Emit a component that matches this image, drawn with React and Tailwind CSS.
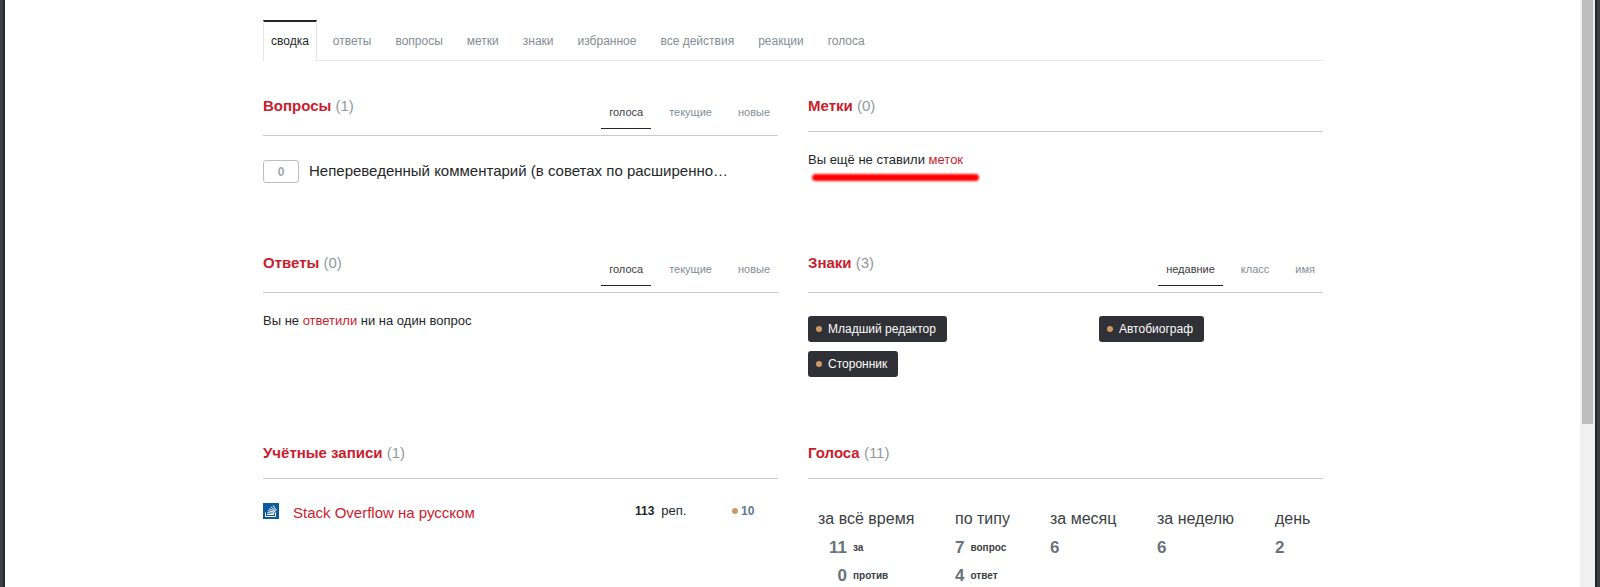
import React from 'react';

const tabs = ['ответы', 'вопросы', 'метки', 'знаки', 'избранное', 'все действия', 'реакции', 'голоса'];

function SubTabs({ items }) {
  return (
    <div className="flex gap-[10px] text-[11px]">
      {items.map((item, i) => (
        <a
          key={item}
          className={`block h-[37px] px-2 pt-[12px] leading-[16px] ${i === 0 ? 'border-b border-b-[#242729] text-[#3b4045]' : 'text-[#848d95]'}`}
        >
          {item}
        </a>
      ))}
    </div>
  );
}

function Header({ title, count, items }) {
  return (
    <div className={`flex justify-between border-b border-[#c8ccd0] ${items ? 'h-[44px]' : 'h-[40px]'}`}>
      <h2 className="text-[15px] leading-[28px] font-bold text-[#c91d2e]">
        {title} <span className="font-normal text-[#9199a1]">({count})</span>
      </h2>
      {items && <SubTabs items={items} />}
    </div>
  );
}

function Badge({ label, className }) {
  return (
    <a className={`flex h-[26px] items-center rounded-[3px] bg-[#2f3136] pl-[8px] pr-[11px] text-[12px] text-[#fcfcfc] ${className}`}>
      <span className="mr-[6px] h-[6px] w-[6px] rounded-full bg-[#cb9966]"></span>
      {label}
    </a>
  );
}

function StackIcon() {
  return (
    <svg width="16" height="16" viewBox="0 0 16 16" className="shrink-0">
      <rect width="16" height="16" fill="#0b5a9e" />
      <path d="M2.5 9.5v4h10v-4" fill="none" stroke="#fff" strokeWidth="1" />
      <path
        d="M4 11.5h7M4.2 9.7l6.9.7M4.9 7.6l6.6 1.8M6 5.6l6 3M7.8 3.8l5 4.2M10 2.4l3.5 5"
        fill="none"
        stroke="#fff"
        strokeWidth="1"
      />
    </svg>
  );
}

function VoteRow({ num, label, numWidth }) {
  return (
    <div className="flex h-[28px] items-center">
      <span className={`text-[17px] font-bold text-[#6a737c] ${numWidth}`}>{num}</span>
      {label && <span className="ml-[6px] text-[10px] font-bold text-[#3b4045]">{label}</span>}
    </div>
  );
}

export default function App() {
  return (
    <div className="flex h-[587px] overflow-hidden bg-white font-['Liberation_Sans',Arial,sans-serif] text-[#242729]">
      <div className="w-[5px] shrink-0 border-l-[3px] border-[#3c3f41] bg-[#242729]"></div>

      <main className="relative flex-1 overflow-hidden">
        <div className="ml-[258px] w-[1060px] pt-[20px]">
          {/* Profile tabs */}
          <nav className="flex h-[41px] gap-2 border-b border-[#e4e6e8] text-[12px]">
            <a className="h-[41px] border-x border-t-2 border-x-[#e4e6e8] border-t-[#242729] bg-white px-[7px] pt-[11px] leading-[16px] text-[#242729]">
              сводка
            </a>
            {tabs.map((tab) => (
              <a key={tab} className="px-2 pt-[13px] leading-[16px] text-[#848d95]">
                {tab}
              </a>
            ))}
          </nav>

          <div className="mt-[31px] grid grid-cols-2 grid-rows-[157px_190px_auto] gap-x-[30px]">
            <section>
              <Header title="Вопросы" count="1" items={['голоса', 'текущие', 'новые']} />
              <div className="mt-[24px] flex items-start">
                <span className="flex h-[23px] w-[36px] items-center justify-center rounded-[3px] border border-[#bbc0c4] text-[12px] font-bold text-[#9fa6ad]">
                  0
                </span>
                <a className="ml-[10px] text-[15px] leading-[21px] text-[#242729]">
                  Непереведенный комментарий (в советах по расширенно…
                </a>
              </div>
            </section>

            <section>
              <Header title="Метки" count="0" />
              <p className="mt-[19px] text-[13px] leading-[17px]">
                Вы ещё не ставили <a className="text-[#c91d2e]">меток</a>
              </p>
            </section>

            <section>
              <Header title="Ответы" count="0" items={['голоса', 'текущие', 'новые']} />
              <p className="mt-[19px] text-[13px] leading-[17px]">
                Вы не <a className="text-[#c91d2e]">ответили</a> ни на один вопрос
              </p>
            </section>

            <section>
              <Header title="Знаки" count="3" items={['недавние', 'класс', 'имя']} />
              <div className="mt-[23px] grid grid-cols-[291px_1fr] gap-y-[9px]">
                <Badge label="Младший редактор" className="w-fit" />
                <Badge label="Автобиограф" className="w-fit" />
                <Badge label="Сторонник" className="w-fit" />
              </div>
            </section>

            <section>
              <Header title="Учётные записи" count="1" />
              <div className="mt-[24px] flex items-start">
                <StackIcon />
                <a className="ml-[14px] w-[342px] text-[15px] leading-[20px] text-[#c91d2e]">Stack Overflow на русском</a>
                <span className="w-[97px] text-[12px] leading-[16px]">
                  <b>113</b>
                  <span className="ml-[7px] text-[13px]">реп.</span>
                </span>
                <span className="flex h-[16px] items-center text-[12px] font-bold text-[#5e7a96]">
                  <span className="mr-[3px] h-[6px] w-[6px] rounded-full bg-[#cb9966]"></span>
                  10
                </span>
              </div>
            </section>

            <section>
              <Header title="Голоса" count="11" />
              <div className="mt-[30px] ml-[10px] flex text-[16px] leading-[20px] text-[#3b4045]">
                <div className="w-[137px]">
                  <div className="mb-[5px]">за всё время</div>
                  <VoteRow num="11" label="за" numWidth="w-[29px] text-right" />
                  <VoteRow num="0" label="против" numWidth="w-[29px] text-right" />
                </div>
                <div className="w-[95px]">
                  <div className="mb-[5px]">по типу</div>
                  <VoteRow num="7" label="вопрос" />
                  <VoteRow num="4" label="ответ" />
                </div>
                <div className="w-[107px]">
                  <div className="mb-[5px]">за месяц</div>
                  <VoteRow num="6" />
                </div>
                <div className="w-[118px]">
                  <div className="mb-[5px]">за неделю</div>
                  <VoteRow num="6" />
                </div>
                <div>
                  <div className="mb-[5px]">день</div>
                  <VoteRow num="2" />
                </div>
              </div>
            </section>
          </div>
        </div>

        {/* Red marker stroke drawn over the screenshot */}
        <div className="absolute left-[807px] top-[174px] h-[7px] w-[167px] rounded-full bg-[#ff0000] blur-[1px]"></div>
      </main>

      <div className="w-[15px] shrink-0 bg-[#f0f0f0] px-[2px]">
        <div className="h-[424px] w-[11px] bg-[#bdbdbd]"></div>
      </div>
      <div className="w-[5px] shrink-0 border-r-[3px] border-[#3c3f41] bg-[#242729]"></div>
    </div>
  );
}
